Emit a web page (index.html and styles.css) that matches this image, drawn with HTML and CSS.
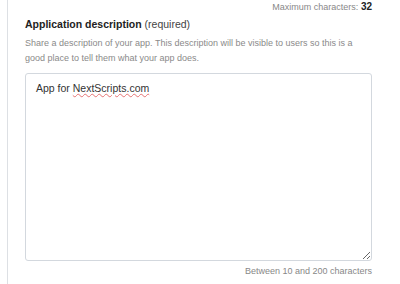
FILE: index.html
```html
<!DOCTYPE html>
<html lang="en">
<head>
    <meta charset="UTF-8">
    <meta name="viewport" content="width=device-width, initial-scale=1.0">
    <title>Application description</title>
    <link rel="stylesheet" href="styles.css">
</head>
<body>
    <div class="panel">
        <div class="field-limit">Maximum characters: <b>32</b></div>

        <div class="field">
            <label class="field-label" for="appDescription">Application description <span class="field-note">(required)</span></label>
            <p class="field-help">Share a description of your app. This description will be visible to users so this is a good place to tell them what your app does.</p>
            <div id="appDescription" class="field-input" contenteditable="true" role="textbox" aria-multiline="true">App for <span class="misspelled">NextScripts.com</span></div>
            <div class="field-limit">Between 10 and 200 characters</div>
        </div>
    </div>
</body>
</html>
```

FILE: styles.css
```css
body {
    margin: 0;
    font-family: "Liberation Sans", Arial, sans-serif;
    background-color: #fff;
    color: #222;
}
.panel {
    margin-left: 7px;
    padding: 0 28px 0 17px;
    border-left: 1px solid #dde0e4;
    min-height: 284px;
    box-sizing: border-box;
}
.field-limit {
    text-align: right;
    font-size: 9px;
    line-height: 14px;
    color: #888;
}
.field-limit b {
    color: #222;
    font-size: 10px;
}
.field {
    margin-top: 1px;
}
.field-label {
    display: block;
    font-size: 10.5px;
    font-weight: bold;
    line-height: 18px;
    color: #222;
}
.field-note {
    font-weight: normal;
    color: #444;
}
.field-help {
    margin: 3px 0 7px;
    font-size: 9px;
    line-height: 15px;
    color: #8a8a8a;
}
.field-input {
    height: 188px;
    padding: 7px 10px;
    box-sizing: border-box;
    border: 1px solid #d3d8de;
    border-radius: 3px;
    font-size: 10.5px;
    line-height: 14px;
    color: #333;
    overflow: auto;
    resize: vertical;
    outline: none;
    margin-bottom: 3px;
}
.misspelled {
    text-decoration: underline wavy #e57373;
    text-decoration-thickness: 1px;
    text-underline-offset: 1px;
}
```
